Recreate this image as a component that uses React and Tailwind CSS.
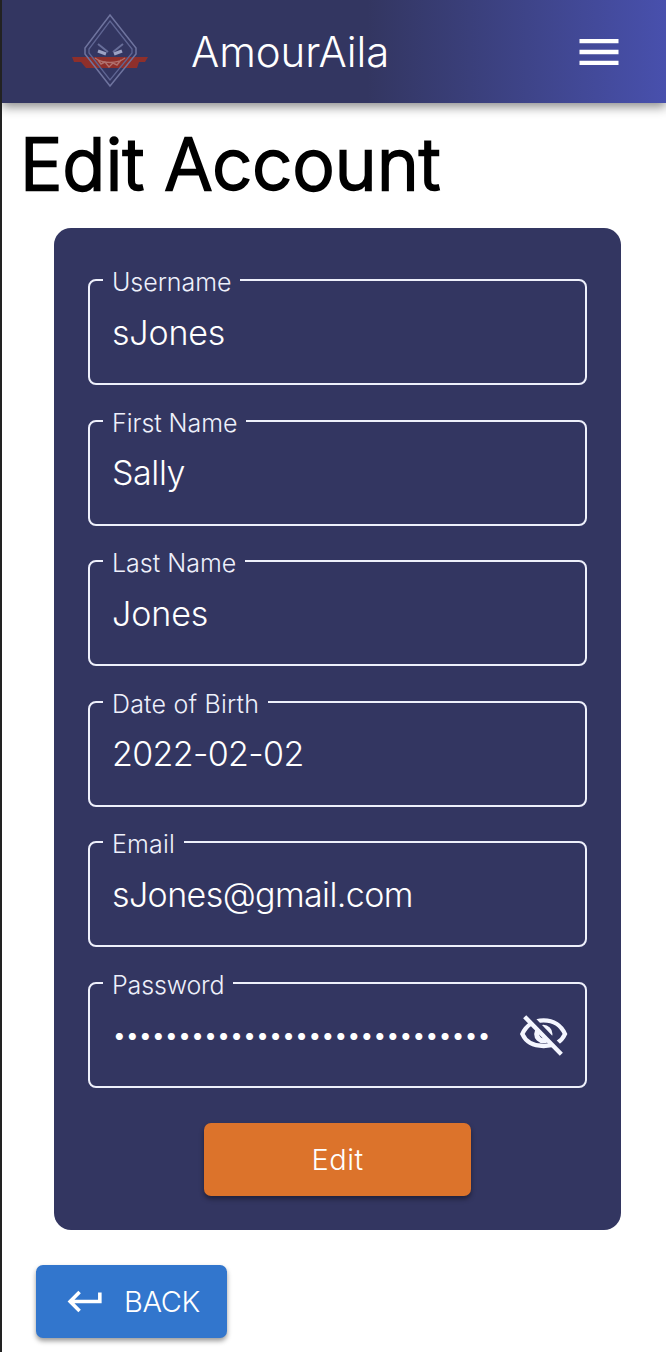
import { MdKeyboardReturn, MdMenu } from "react-icons/md";

const fields = [
  { label: "Username", value: "sJones", labelClass: "tracking-[-0.05px]", valueClass: "tracking-[-0.2px]" },
  { label: "First Name", value: "Sally", labelClass: "tracking-[-0.05px]", valueClass: "tracking-[-0.4px]" },
  { label: "Last Name", value: "Jones", labelClass: "tracking-[0px]", valueClass: "tracking-[-0.1px]" },
  { label: "Date of Birth", value: "2022-02-02", labelClass: "tracking-[0.2px]", valueClass: "tracking-[-0.65px]" },
  { label: "Email", value: "sJones@gmail.com", labelClass: "tracking-[0.2px]", valueClass: "tracking-[-0.6px]" },
];

function Logo() {
  return (
    <svg viewBox="0 0 80 76" className="-mt-[4px] h-[76px] w-[80px]" fill="none">
      <path d="M2 45l76 0-3 5h-6l-2 6H16l-5-6H4z" fill="#8e2f2b" />
      <path d="M40 3 66 36v6L40 74 15 42v-6Z" stroke="#6f749f" strokeWidth="1.5" />
      <path d="M40 9 62 37v4L40 68 19 41v-4Z" stroke="#5f6593" strokeWidth="1.3" />
      <path d="m28 32 10 8M53 32l-10 8" stroke="#686e99" strokeWidth="2" />
      <path d="m28 39 8 3M52 39l-8 3" stroke="#9ca2c4" strokeWidth="3.4" />
      <path d="M25 46c8 6 22 6 30 0M28 48l3 4 4-2 4 5 4-4 4 2 4-5" stroke="#b0716e" strokeWidth="1.4" />
    </svg>
  );
}

function EyeOff() {
  return (
    <svg viewBox="0 0 192 168" className="mt-[3px] -mr-[7px] h-[56px] w-[64px] shrink-0" fill="none" stroke="#f4f6ff">
      <mask id="slash-gap" maskUnits="userSpaceOnUse" x="0" y="0" width="192" height="168">
        <rect width="192" height="168" fill="#fff" stroke="none" />
        <path d="M37 7 163 139" stroke="#000" strokeWidth="16" />
      </mask>
      <g mask="url(#slash-gap)">
        <path d="M31 78C42 53 65 37 95 37s53 16 64 41c-11 25-34 36-64 36S42 103 31 78Z" strokeWidth="13" />
        <circle cx="94" cy="78" r="20" strokeWidth="15" />
      </g>
      <path d="m38 26 110 113" strokeWidth="13" />
    </svg>
  );
}

function Field({ label, labelClass, children }) {
  return (
    <fieldset className="h-[106px] min-w-0 rounded-[8px] border-2 border-[#eef0fb] pr-[16px] pl-[13px]">
      <legend className="h-[2px] px-[9px] text-[25px] leading-[7px] whitespace-nowrap text-[#eef0fb]">
        <span className={labelClass}>{label}</span>
      </legend>
      <div className="flex h-[102px] items-center justify-between pl-[9px]">{children}</div>
    </fieldset>
  );
}

export default function App() {
  return (
    <div className="h-[1352px] w-[666px] overflow-hidden border-l-2 border-[#222] bg-white font-['Inter',sans-serif] font-light text-white">
      <header className="flex h-[103px] items-center bg-linear-to-r from-[#333661] from-55% to-[#4850ad] pl-[68px] shadow-[0_4px_10px_rgba(0,0,0,0.45)]">
        <Logo />
        <span className="ml-[41px] text-[42px] tracking-[-0.1px]">AmourAila</span>
        <MdMenu className="mr-[41px] ml-auto size-[52px]" />
      </header>
      <h1 className="mt-[24px] ml-[18px] h-[75px] text-[71px] leading-[74px] tracking-[0.35px] whitespace-nowrap text-black [-webkit-text-stroke:2.4px_black] [stroke-linejoin:round]">
        Edit Account
      </h1>
      <main className="mt-[26px] ml-[52px] flex h-[1002px] w-[567px] flex-col rounded-[17px] bg-[#333661] px-[34px] pt-[51px]">
        <div className="flex flex-col gap-[34.6px]">
          {fields.map((f) => (
            <Field key={f.label} label={f.label} labelClass={f.labelClass}>
              <span className={`text-[34px] ${f.valueClass}`}>{f.value}</span>
            </Field>
          ))}
          <Field label="Password" labelClass="tracking-[-0.15px]">
            <span className="text-[26px] tracking-[-1.6px]">{"•".repeat(29)}</span>
            <EyeOff />
          </Field>
        </div>
        <button className="mt-[35px] h-[73px] w-[267px] self-center rounded-[7px] bg-[#dc732b] text-[29px] font-light tracking-[0.5px] shadow-[0_3px_5px_rgba(0,0,0,0.4)]">
          Edit
        </button>
      </main>
      <button className="mt-[35px] ml-[34px] flex h-[73px] w-[191px] items-center rounded-[7px] bg-[#3276cd] pl-[28px] text-[29px] shadow-[0_3px_5px_rgba(0,0,0,0.4)]">
        <MdKeyboardReturn className="size-[43px]" />
        <span className="ml-[17px] tracking-[-0.4px]">BACK</span>
      </button>
    </div>
  );
}
